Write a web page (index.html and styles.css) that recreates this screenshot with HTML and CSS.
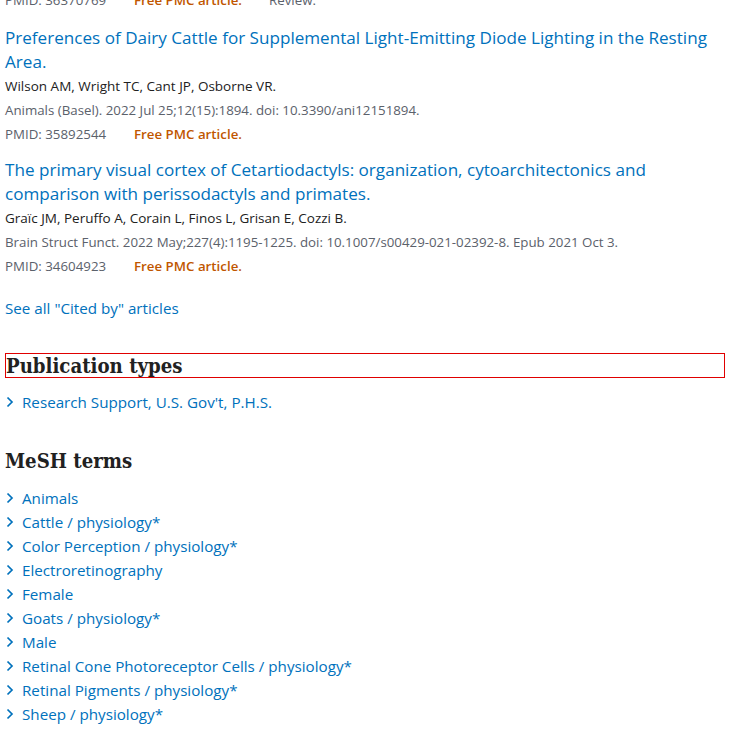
FILE: index.html
```html
<!DOCTYPE html>
<html>
<head>
<meta charset="utf-8">
<link rel="stylesheet" href="styles.css">
</head>
<body>
<div class="page">
  <div class="cited">
    <div class="item first">
      <div class="meta"><span class="pmid">PMID: 36370769</span><span class="free">Free PMC article.</span><span class="ptype">Review.</span></div>
    </div>
    <div class="item">
      <a class="title">Preferences of Dairy Cattle for Supplemental Light-Emitting Diode Lighting in the Resting Area.</a>
      <div class="authors">Wilson AM, Wright TC, Cant JP, Osborne VR.</div>
      <div class="cit">Animals (Basel). 2022 Jul 25;12(15):1894. doi: 10.3390/ani12151894.</div>
      <div class="meta"><span class="pmid">PMID: 35892544</span><span class="free">Free PMC article.</span></div>
    </div>
    <div class="item">
      <a class="title">The primary visual cortex of Cetartiodactyls: organization, cytoarchitectonics and comparison with perissodactyls and primates.</a>
      <div class="authors">Graïc JM, Peruffo A, Corain L, Finos L, Grisan E, Cozzi B.</div>
      <div class="cit">Brain Struct Funct. 2022 May;227(4):1195-1225. doi: 10.1007/s00429-021-02392-8. Epub 2021 Oct 3.</div>
      <div class="meta"><span class="pmid">PMID: 34604923</span><span class="free">Free PMC article.</span></div>
    </div>
    <a class="seeall">See all "Cited by" articles</a>
  </div>

  <h2 class="heading boxed">Publication types</h2>
  <ul class="terms">
    <li><svg class="chev" viewBox="0 0 8 12"><path d="M1.5 1.5 L6 6 L1.5 10.5"/></svg><a>Research Support, U.S. Gov't, P.H.S.</a></li>
  </ul>

  <h2 class="heading">MeSH terms</h2>
  <ul class="terms">
    <li><svg class="chev" viewBox="0 0 8 12"><path d="M1.5 1.5 L6 6 L1.5 10.5"/></svg><a>Animals</a></li>
    <li><svg class="chev" viewBox="0 0 8 12"><path d="M1.5 1.5 L6 6 L1.5 10.5"/></svg><a>Cattle / physiology*</a></li>
    <li><svg class="chev" viewBox="0 0 8 12"><path d="M1.5 1.5 L6 6 L1.5 10.5"/></svg><a>Color Perception / physiology*</a></li>
    <li><svg class="chev" viewBox="0 0 8 12"><path d="M1.5 1.5 L6 6 L1.5 10.5"/></svg><a>Electroretinography</a></li>
    <li><svg class="chev" viewBox="0 0 8 12"><path d="M1.5 1.5 L6 6 L1.5 10.5"/></svg><a>Female</a></li>
    <li><svg class="chev" viewBox="0 0 8 12"><path d="M1.5 1.5 L6 6 L1.5 10.5"/></svg><a>Goats / physiology*</a></li>
    <li><svg class="chev" viewBox="0 0 8 12"><path d="M1.5 1.5 L6 6 L1.5 10.5"/></svg><a>Male</a></li>
    <li><svg class="chev" viewBox="0 0 8 12"><path d="M1.5 1.5 L6 6 L1.5 10.5"/></svg><a>Retinal Cone Photoreceptor Cells / physiology*</a></li>
    <li><svg class="chev" viewBox="0 0 8 12"><path d="M1.5 1.5 L6 6 L1.5 10.5"/></svg><a>Retinal Pigments / physiology*</a></li>
    <li><svg class="chev" viewBox="0 0 8 12"><path d="M1.5 1.5 L6 6 L1.5 10.5"/></svg><a>Sheep / physiology*</a></li>
  </ul>
</div>
</body>
</html>
```
FILE: styles.css
```css
html, body {
  margin: 0;
  padding: 0;
  background: #ffffff;
}
body {
  font-family: "Open Sans", "Noto Sans", sans-serif;
  color: #212121;
  overflow: hidden;
}
.page {
  padding: 0 5px;
}
.cited {
  margin-top: -12px;
}
.item {
  margin-bottom: 12px;
}
.item.first {
  margin-bottom: 14px;
}
.title {
  display: block;
  font-size: 17.1px;
  line-height: 23.5px;
  color: #0071bc;
  text-decoration: none;
}
.authors {
  margin-top: 1px;
  font-size: 13.5px;
  line-height: 24px;
  color: #212121;
}
.cit {
  font-size: 13.3px;
  line-height: 24px;
  color: #5b616b;
}
.meta {
  font-size: 13.3px;
  line-height: 24px;
  color: #5b616b;
  display: flex;
}
.pmid {
  width: 129px;
}
.free {
  color: #c05600;
  font-weight: 600;
  width: 135px;
}
.seeall {
  display: block;
  margin-top: 18px;
  font-size: 15.2px;
  line-height: 24px;
  color: #0071bc;
}
.heading {
  font-family: "DejaVu Serif Condensed", "DejaVu Serif", serif;
  font-stretch: condensed;
  font-weight: bold;
  font-size: 20.2px;
  line-height: 24px;
  color: #212121;
  margin: 0;
}
.boxed {
  margin-top: 33px;
  padding-top: 1px;
  line-height: 22px;
  border: 1px solid #e00000;
}
.terms {
  list-style: none;
  margin: 13px 0 0;
  padding: 0;
}
.boxed + .terms {
  margin-top: 12px;
}
.terms + .heading {
  margin-top: 35px;
}
.terms li {
  display: flex;
  align-items: center;
  font-size: 15.2px;
  line-height: 24px;
  color: #0071bc;
}
.chev {
  width: 8px;
  height: 12px;
  margin: 0 8px 0 1px;
  flex: none;
}
.chev path {
  fill: none;
  stroke: #0071bc;
  stroke-width: 1.7;
}
```
